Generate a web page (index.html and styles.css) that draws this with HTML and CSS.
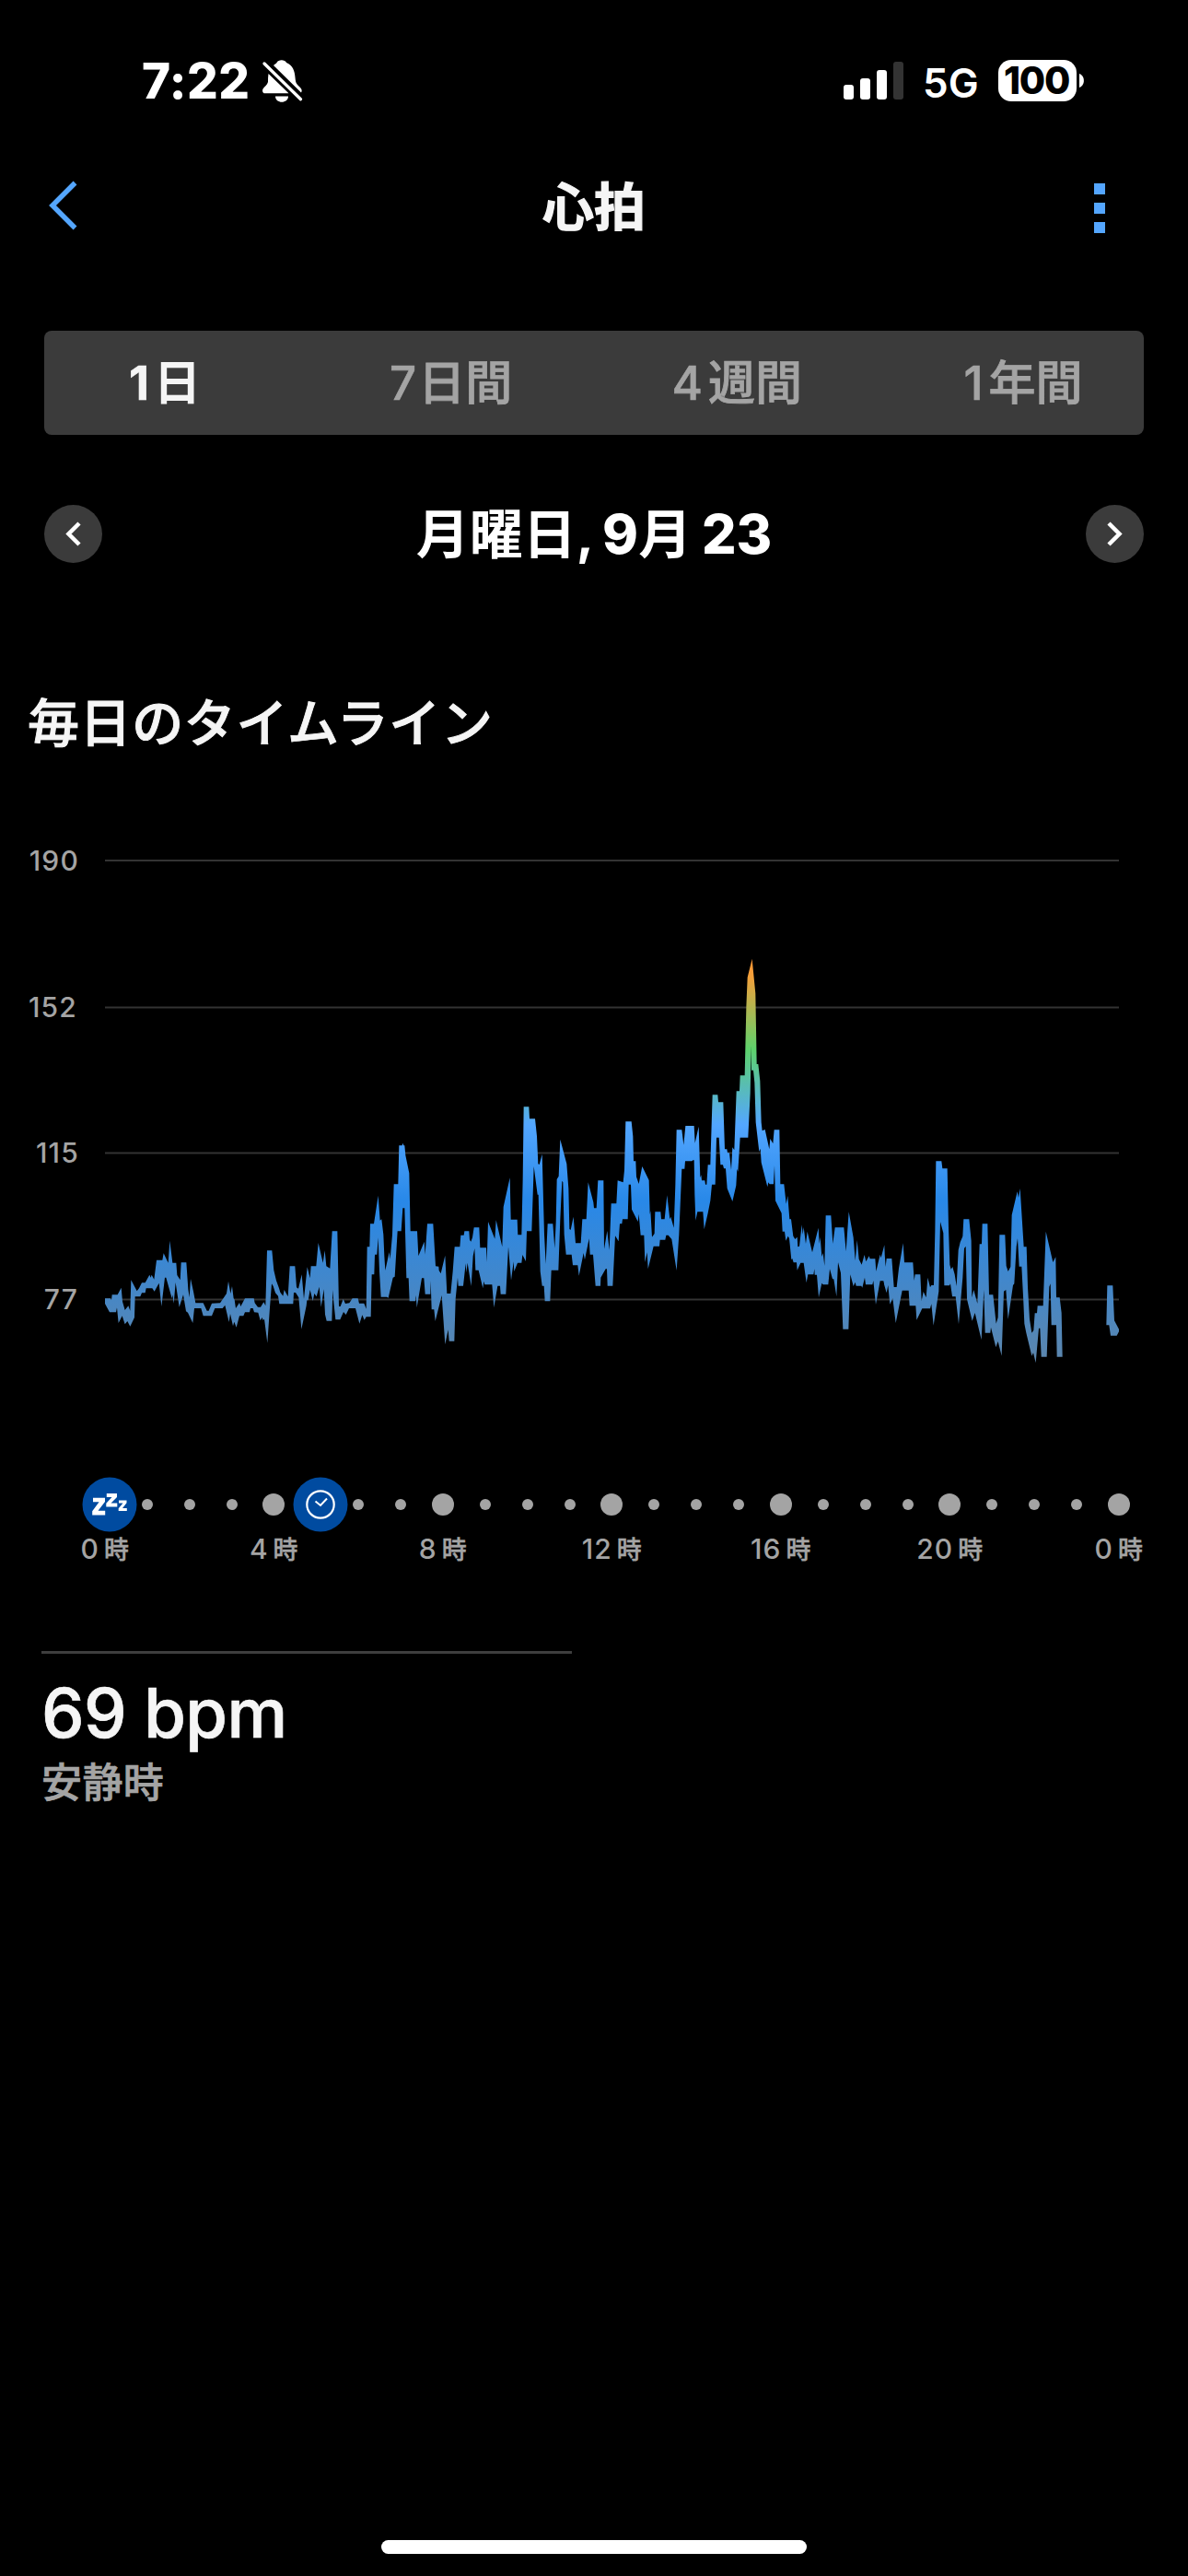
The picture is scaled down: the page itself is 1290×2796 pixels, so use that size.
FILE: index.html
```html
<!DOCTYPE html>
<html lang="ja">
<head>
<meta charset="utf-8">
<title>心拍</title>
<link rel="stylesheet" href="styles.css">
</head>
<body>
<div class="status">
  <div class="status-left">
    <span class="clock">7:22</span>
    <svg class="bell" width="46" height="48" viewBox="284 64 46 48">
      <path fill="#fff" d="M291 89 C291 86 291 83 291.500 80 L313.500 101.300 H288 C285 101.300 284.500 98.500 285.500 96.500 C287.500 93.500 290 92.500 291 89Z M297 71 C298.500 69.500 300 69 300.500 68 C302 64.200 309.500 64.200 311 68 C318 71 320 77 320.500 84 C321 91 322.500 91.500 326 95 C328 97 328 99 327 100.500Z M299 104.500 H313 C313 112.800 299 112.800 299 104.500Z"/>
      <path fill="none" stroke="#fff" stroke-width="3.300" stroke-linecap="round" d="M287 69 L326.500 107.700"/>
    </svg>
  </div>
  <div class="status-right">
    <svg width="65" height="42" viewBox="0 0 65 42">
      <g fill="#fff"><rect x="0" y="25" width="11" height="16" rx="3"/><rect x="18" y="18" width="11" height="23" rx="3"/><rect x="36" y="9" width="11" height="32" rx="3"/></g>
      <rect x="54" y="0" width="11" height="41" rx="3" fill="#333"/>
    </svg>
    <span class="network">5G</span>
    <span class="battery">100</span>
    <svg class="nub" width="5" height="15" viewBox="0 0 5 15"><path fill="#fff" d="M0 0 C6.500 2 6.500 13 0 15Z"/></svg>
  </div>
</div>

<header class="nav">
  <svg width="32" height="54" viewBox="0 0 32 54"><path fill="none" stroke="#54a6ff" stroke-width="5.500" d="M29.500 2.500 L5 27 L29.500 51.500"/></svg>
  <h1>心拍</h1>
  <div class="more"><i></i><i></i><i></i></div>
</header>

<nav class="tabs">
  <span class="tab active"><b>1</b>日</span>
  <span class="tab seven"><b>7</b>日間</span>
  <span class="tab"><b>4</b>週間</span>
  <span class="tab"><b>1</b>年間</span>
</nav>

<div class="date-row">
  <span class="round"><svg width="63" height="63" viewBox="0 0 63 63"><path d="M38 20 L26.500 31.500 L38 43"/></svg></span>
  <span class="date">月曜日, <b>9</b>月 <b>23</b></span>
  <span class="round"><svg width="63" height="63" viewBox="0 0 63 63"><path d="M25 20 L36.500 31.500 L25 43"/></svg></span>
</div>

<h2>毎日のタイムライン</h2>

<svg class="chart" width="1290" height="600" viewBox="0 900 1290 600">
  <defs>
    <linearGradient id="zones" gradientUnits="userSpaceOnUse" x1="0" y1="1040" x2="0" y2="1480">
      <stop offset="0" stop-color="#ff9433"/>
      <stop offset="0.045" stop-color="#f3a03b"/>
      <stop offset="0.225" stop-color="#5ed26c"/>
      <stop offset="0.41" stop-color="#53a6ff"/>
      <stop offset="0.6" stop-color="#2888e8"/>
      <stop offset="1" stop-color="#5d86ac"/>
    </linearGradient>
    <clipPath id="band">
      <path transform="translate(100 1180) scale(.333333)" d="M42,688 60,688 63,694 65,676 83,676 95,653 99,698 107,726 118,712 124,728 127,628 146,664 153,655 162,637 173,637 187,611 191,620 194,611 202,626 210,563 229,563 233,541 248,572 253,500 262,572 274,572 277,612 287,628 290,571 307,571 313,658 317,685 321,624 330,665 337,703 362,703 374,728 380,728 390,704 417,703 430,684 438,672 444,632 451,672 456,648 461,688 464,692 468,720 480,702 484,714 498,688 527,688 530,703 540,716 549,716 559,700 565,712 570,532 586,532 592,596 600,630 609,655 613,668 622,680 626,660 638,682 644,583 661,583 666,652 672,656 683,610 690,690 701,586 710,622 713,583 730,583 737,507 752,572 758,532 763,583 775,590 782,469 799,469 804,714 809,714 818,690 825,705 838,703 848,688 866,688 870,704 886,704 893,722 896,520 902,520 902,748 893,748 887,758 880,742 871,770 858,720 837,720 827,741 819,732 808,757 793,757 787,700 784,660 781,761 764,761 759,740 755,658 746,716 740,650 731,682 724,672 719,696 710,660 704,694 700,694 698,712 682,788 673,685 663,669 657,669 655,706 610,706 606,680 597,670 590,648 585,640 579,718 571,833 561,755 557,759 554,750 548,760 541,734 528,733 524,720 516,720 513,733 498,733 493,745 480,745 470,782 463,764 459,778 450,738 446,765 433,710 425,720 400,720 390,745 362,745 355,720 333,720 328,768 312,734 306,730 297,676 284,716 272,636 266,704 262,676 260,688 241,620 237,620 226,714 218,638 203,665 196,655 176,655 173,670 162,670 157,682 140,682 138,750 124,779 115,762 107,772 98,745 86,768 81,718 78,733 57,733 50,720 42,705Z"/>
      <path transform="translate(400 1180) scale(.333333)" d="M0,520 4,520 6,445 18,445 32,353 38,434 43,430 49,480 52,550 55,597 68,537 71,560 78,480 83,316 97,316 100,190 110,190 112,182 115,190 118,190 121,222 133,280 137,469 159,469 163,550 182,503 185,545 192,445 211,445 219,583 229,584 230,597 236,607 250,548 256,672 268,672 275,600 281,520 298,520 301,482 311,482 313,469 328,469 330,497 334,503 339,490 344,457 361,457 364,523 384,523 386,570 390,438 412,494 416,433 436,520 440,390 461,295 464,431 485,431 487,481 499,481 503,300 506,64 523,64 525,103 543,103 549,160 553,250 557,252 566,218 569,330 573,480 578,575 584,445 601,445 607,525 611,440 614,300 620,290 625,170 646,250 652,330 655,462 659,465 668,422 675,508 692,508 697,430 710,430 716,310 733,375 735,394 743,394 748,304 766,304 768,528 778,468 785,530 791,379 808,379 812,304 830,310 834,270 838,112 843,112 843,430 828,430 826,445 819,445 815,502 804,484 796,647 779,647 777,592 773,592 757,620 756,647 740,647 732,545 722,545 719,493 705,562 701,540 686,614 682,580 666,580 662,545 644,545 638,480 634,310 631,305 625,430 619,596 596,596 592,697 575,697 572,647 566,647 560,600 554,350 551,350 539,258 535,380 532,469 516,469 513,567 502,546 499,572 486,572 475,600 473,568 465,629 456,520 448,674 431,674 429,647 421,647 409,718 403,643 379,643 376,632 373,655 359,596 349,596 346,525 341,550 335,648 323,572 319,604 317,574 309,647 293,647 291,620 284,690 280,827 263,827 260,790 250,838 239,678 218,762 214,724 206,724 203,630 202,674 185,674 181,622 174,622 158,718 155,678 153,697 134,697 131,622 124,622 118,394 112,394 107,469 95,469 86,617 80,620 65,686 60,683 41,683 36,600 32,490 28,545 21,545 19,610 11,610 8,748 0,748Z"/>
      <path transform="translate(680 1020) scale(.333333)" d="M0,592 17,592 22,640 24,721 31,721 33,772 41,795 52,738 74,783 77,895 79,882 84,968 92,957 94,886 112,886 114,910 125,910 133,832 142,910 145,902 155,938 160,800 164,619 181,619 187,668 193,606 221,606 224,662 236,608 241,775 244,766 246,784 256,784 258,797 262,797 266,733 274,733 281,505 298,505 300,529 316,529 321,682 328,682 330,694 336,694 342,750 346,676 352,685 359,493 369,493 371,442 386,442 391,220 395,122 410,62 421,175 425,405 430,405 436,460 440,595 443,622 452,618 466,682 469,648 478,664 482,619 499,619 502,796 514,796 521,860 526,834 532,910 537,910 544,965 550,975 557,968 559,1000 564,998 572,928 575,960 578,936 585,990 590,950 606,1018 626,938 629,990 632,968 637,1032 641,1020 646,1062 650,898 667,898 673,990 680,937 709,937 716,1015 725,886 740,970 746,1045 752,978 758,1040 767,1058 776,1026 781,1048 791,1030 794,1039 811,1039 814,1080 827,1025 830,1036 841,994 842,1020 842,1128 838,1111 827,1111 813,1188 805,1110 802,1123 780,1123 777,1100 769,1133 766,1127 749,1127 746,1115 740,1128 730,1090 724,1268 706,1268 699,1085 690,1050 685,1162 676,1105 672,1105 663,1072 658,1123 641,1123 637,1118 627,1165 621,1091 614,1091 613,1072 610,1090 592,1090 587,1117 578,1052 568,1052 557,1076 555,1051 545,1051 541,1038 538,1042 531,972 527,965 520,980 516,950 509,950 506,890 486,850 483,735 480,796 467,796 463,790 460,805 440,725 437,680 433,690 422,595 418,465 414,425 408,425 407,345 404,500 397,644 371,644 364,755 361,746 358,800 346,852 329,810 324,745 318,745 315,733 307,733 302,644 294,644 290,797 279,797 274,850 266,890 254,943 250,886 232,886 226,914 223,830 221,718 217,718 214,721 192,721 190,746 181,746 172,960 164,1077 148,975 137,962 130,962 127,977 110,977 108,998 89,998 71,1072 68,1018 61,1050 58,962 47,962 41,893 38,918 18,878 15,797 8,797 5,910 0,910Z"/>
      <path transform="translate(960 1220) scale(.333333)" d="M0,395 5,465 8,438 25,438 32,531 41,531 48,470 62,388 66,451 94,451 98,510 101,490 118,490 122,577 128,546 137,565 142,500 150,532 154,525 162,525 166,350 169,121 187,121 190,145 206,145 210,340 214,458 218,473 223,465 230,490 236,528 242,410 248,385 256,366 259,310 277,310 284,380 286,565 292,540 304,585 311,391 318,391 320,325 337,325 342,556 355,556 365,650 371,630 376,361 394,361 398,462 404,480 412,465 416,296 434,220 438,240 443,210 455,400 464,400 468,530 474,635 481,680 487,672 491,616 498,616 500,592 518,592 527,350 550,450 559,433 561,565 572,565 578,615 581,758 563,758 561,655 545,655 542,520 538,530 530,758 512,758 508,665 504,665 494,778 486,745 481,755 463,680 457,650 454,580 448,464 440,464 435,372 431,400 424,520 420,525 404,636 397,540 390,545 383,755 371,708 364,727 348,662 346,680 329,680 325,540 317,703 296,615 287,641 270,570 266,398 261,405 256,500 243,652 233,562 222,562 216,520 213,526 196,526 193,355 183,318 178,545 161,656 154,586 150,601 124,601 106,638 103,592 83,592 80,542 59,542 38,648 28,568 19,587 13,525 8,550 0,522Z M724,655 727,526 745,526 750,640 765,668 765,676 758,689 738,689 733,655Z"/>
    </clipPath>
  </defs>
  <path class="grid" d="M114 934H1215M114 1093.500H1215M114 1251.500H1215M114 1410.500H1215"/>
  <g class="axis">
    <text x="86" y="944.500">190</text>
    <text x="84" y="1103.500">152</text>
    <text x="86" y="1261.500">115</text>
    <text x="85" y="1421">77</text>
  </g>
  <rect x="100" y="1030" width="1130" height="460" fill="url(#zones)" clip-path="url(#band)"/>
</svg>

<div class="timeline">
  <div class="dots"><i></i><i></i><i></i><i></i><i class="big"></i><i class="none"></i><i></i><i></i><i class="big"></i><i></i><i></i><i></i><i class="big"></i><i></i><i></i><i></i><i class="big"></i><i></i><i></i><i></i><i class="big"></i><i></i><i></i><i></i><i class="big"></i></div>
  <svg class="event sleep" width="60" height="60" viewBox="0 0 60 60"><circle cx="30" cy="30" r="29.500" fill="#004ba0"/><path fill="#fff" d="M12 22.800H25V27L17.500 36.800H25.200V41.500H11.200V37.300L18.600 27.300H12Z M26.800 18H38V22L31.500 28.500H38.300V32.500H26.300V28.700L32.500 22H26.800Z M40 25.500H48.500V28.300L44 34H48.800V37H39.700V34.300L44.500 28.500H40Z"/></svg>
  <svg class="event watch" width="60" height="60" viewBox="0 0 60 60"><circle cx="30" cy="30" r="29.500" fill="#004ba0"/><circle cx="30" cy="30" r="14.700" fill="none" stroke="#fff" stroke-width="2.200"/><path fill="none" stroke="#fff" stroke-width="2" d="M24.500 26.500 L30 31 L37 23.500"/></svg>
</div>
<div class="hours"><span><b>0</b>時</span><span><b>4</b>時</span><span><b>8</b>時</span><span><b>12</b>時</span><span><b>16</b>時</span><span><b>20</b>時</span><span><b>0</b>時</span></div>

<section class="stat">
  <div class="value">69 bpm</div>
  <div class="label">安静時</div>
</section>

<div class="home"></div>
</body>
</html>
```
FILE: styles.css
```css
* { box-sizing: border-box; }
body {
  margin: 0;
  width: 1290px;
  height: 2796px;
  overflow: hidden;
  display: flex;
  flex-direction: column;
  background: #000;
  color: #f5f5f5;
  font-family: Inter, "Noto Sans CJK JP", sans-serif;
}
svg { display: block; flex: none; }
h1, h2 { margin: 0; }

.status {
  display: flex;
  justify-content: space-between;
  height: 67px;
  margin-top: 54px;
  padding: 0 113px 0 154px;
  color: #fff;
  line-height: 68px;
}
.status-left, .status-right { display: flex; align-items: center; }
.clock { width: 130px; font-size: 53px; font-weight: 800; letter-spacing: 0.5px; white-space: nowrap; }
.network { width: 62px; margin: 4px 20px 0 21px; font-size: 44px; font-weight: 600; }
.battery {
  width: 85px;
  height: 45px;
  border-radius: 14px;
  background: #fff;
  color: #000;
  font-size: 41px;
  font-weight: 800;
  line-height: 45px;
  text-align: center;
  letter-spacing: -1.2px;
  text-indent: -2px;
}
.nub { margin-left: 3px; }

.nav {
  display: flex;
  align-items: center;
  justify-content: space-between;
  height: 100px;
  margin-top: 54px;
  padding: 0 90px 0 52px;
}
.nav svg { margin-bottom: 4px; }
h1 { margin-left: 18px; font-size: 56px; font-weight: 700; line-height: 99px; -webkit-text-stroke: 1.2px; }
.more { display: flex; flex-direction: column; gap: 9px; width: 12px; margin-top: 2px; }
.more i { height: 12px; background: #54a6ff; }

.tabs {
  display: flex;
  justify-content: space-between;
  height: 113px;
  margin: 84px 48px 0;
  padding: 0 41px 0 41px;
  border-radius: 8px;
  background: #3b3b3b;
  color: #a4a4a4;
  font-size: 51px;
  font-weight: 500;
  line-height: 113px;
}
.tab { width: 180px; text-align: center; white-space: nowrap; -webkit-text-stroke: 0.8px; }
.tab b { margin-right: 6px; font-weight: 500; -webkit-text-stroke: 0.6px; }
.active { color: #f5f5f5; font-weight: 700; -webkit-text-stroke: 0; }
.active b { margin-right: 5px; font-weight: 700; }
.tab.seven b { margin-right: 2px; }

.date-row {
  display: flex;
  justify-content: space-between;
  height: 63px;
  margin: 76px 48px 0;
  line-height: 64px;
}
.round { width: 63px; border-radius: 50%; background: #3b3b3b; }
.round path { fill: none; stroke: #fff; stroke-width: 4.5; }
.date { color: #fff; font-size: 58px; font-weight: 700; white-space: nowrap; word-spacing: -3px; }
.date b { font-size: 59px; font-weight: 800; }

h2 { margin: 134px 0 0 30px; font-size: 56px; font-weight: 500; line-height: 80px; letter-spacing: 0.6px; -webkit-text-stroke: 0.9px; }

.chart { margin-top: 75px; }
.grid { fill: none; stroke: #333; stroke-width: 2; }
.axis { fill: #a4a4a4; font-size: 30px; font-weight: 500; text-anchor: end; letter-spacing: 1.2px; }

.timeline { position: relative; height: 60px; margin-top: 103px; }
.dots { display: flex; align-items: center; height: 60px; margin-left: 91px; }
.dots i { flex: none; width: 12px; height: 12px; margin: 0 16.94px; border-radius: 50%; background: #a4a4a4; }
.dots .big { width: 24px; height: 24px; margin: 0 10.94px; }
.dots .none { visibility: hidden; }
.event { position: absolute; top: 0; }
.sleep { left: 89px; }
.watch { left: 318px; }

.hours {
  display: flex;
  margin: -2px 0 0 22px;
  color: #a4a4a4;
  font-size: 27px;
  font-weight: 500;
  line-height: 40px;
  -webkit-text-stroke: 0.4px;
}
.hours span { flex: none; width: 183.5px; text-align: center; }
.hours b { margin-right: 5px; font-size: 30px; font-weight: 500; letter-spacing: 1px; -webkit-text-stroke: 0; }

.stat { width: 576px; margin: 89px 0 0 45px; border-top: 3px solid #3e3e3e; }
.value { padding: 24px 0 0; font-size: 74px; font-weight: 500; line-height: 80px; letter-spacing: -0.6px; -webkit-text-stroke: 0.7px; }
.label { margin-top: 6px; color: #a4a4a4; font-size: 44px; font-weight: 500; line-height: 60px; letter-spacing: 0.4px; -webkit-text-stroke: 0.7px; }

.home { width: 462px; height: 15px; margin: auto auto 24px; border-radius: 8px; background: #fff; }
```
